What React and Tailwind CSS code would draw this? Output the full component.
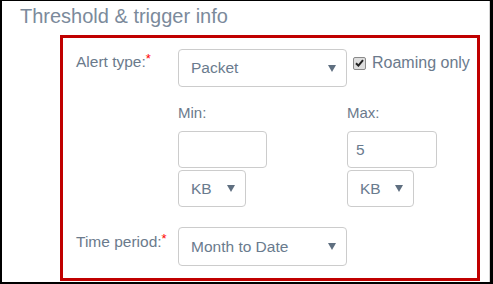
import React from "react";

const font = { fontFamily: '"Liberation Sans", Arial, sans-serif' };

function Arrow() {
  return (
    <svg width="8" height="7" viewBox="0 0 8 7" className="shrink-0">
      <polygon points="0,0 8,0 4,7" fill="#5f6f80" />
    </svg>
  );
}

function FakeSelect({ value, width, height }) {
  return (
    <div
      className={`flex items-center justify-between rounded-[4px] border border-[#cccccc] bg-white pl-[12px] pr-[10px] text-[15.5px] text-[#6a7b8e] ${width} ${height}`}
    >
      <span>{value}</span>
      <Arrow />
    </div>
  );
}

function Label({ children, top }) {
  return (
    <div className={`w-[102px] shrink-0 text-[15.5px] leading-[20px] text-[#6b7a8c] ${top}`}>
      {children}
      <span className="relative -top-[4px] text-[13px] text-[#ff0000]">*</span>
    </div>
  );
}

export default function App() {
  return (
    <div
      style={font}
      className="h-[284px] w-[493px] overflow-hidden border-b-2 border-l-2 border-r-[3px] border-t border-black bg-white"
    >
      <div className="h-full border-r border-[#d4d4d4] pr-[9px]">
        <h2 className="pl-[18px] pt-[2px] text-[20px] leading-[26px] text-[#7b8a9b]">
          Threshold &amp; trigger info
        </h2>
        <div className="ml-[58px] mt-[6px] h-[246px] border-[3px] border-[#c00000] pl-[13px] pt-[11px]">
          <div className="flex items-start">
            <Label top="pt-[3px]">Alert type:</Label>
            <FakeSelect value="Packet" width="w-[169px]" height="h-[38px]" />
            <div className="ml-[6px] flex items-center gap-[6px] pt-[4px] text-[16px] leading-[20px] text-[#6b7a8c]">
              <span className="flex h-[13px] w-[13px] items-center justify-center rounded-[2px] border border-[#8a8a8a] bg-[#dedede]">
                <svg width="9" height="8" viewBox="0 0 9 8">
                  <path d="M1 4.2 L3.4 6.6 L8 1.2" stroke="#222" strokeWidth="2" fill="none" />
                </svg>
              </span>
              <span>Roaming only</span>
            </div>
          </div>

          <div className="ml-[102px] mt-[16px] flex">
            <div className="w-[169px]">
              <div className="text-[15px] leading-[20px] text-[#6b7a8c]">Min:</div>
              <div className="mt-[8px] h-[37px] w-[89px] rounded-[4px] border border-[#cccccc]" />
              <div className="mt-[2px]">
                <FakeSelect value="KB" width="w-[68px]" height="h-[37px]" />
              </div>
            </div>
            <div className="w-[100px]">
              <div className="text-[15px] leading-[20px] text-[#6b7a8c]">Max:</div>
              <div className="mt-[8px] flex h-[37px] w-[90px] items-center rounded-[4px] border border-[#cccccc] pl-[8px] text-[15.5px] text-[#6a7b8e]">
                5
              </div>
              <div className="mt-[2px]">
                <FakeSelect value="KB" width="w-[67px]" height="h-[37px]" />
              </div>
            </div>
          </div>

          <div className="mt-[20px] flex items-start">
            <Label top="pt-[5px]">Time period:</Label>
            <FakeSelect value="Month to Date" width="w-[169px]" height="h-[39px]" />
          </div>
        </div>
      </div>
    </div>
  );
}
